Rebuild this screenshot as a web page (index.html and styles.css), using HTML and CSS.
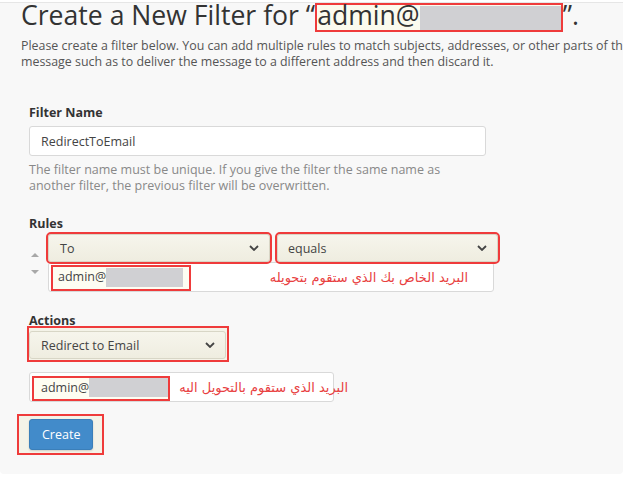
FILE: index.html
```html
<!DOCTYPE html>
<html lang="en">
<head>
    <meta charset="UTF-8">
    <meta name="viewport" content="width=device-width, initial-scale=1.0">
    <title>Create a New Filter</title>
    <link rel="stylesheet" href="styles.css">
</head>
<body>
    <div class="page">
        <h1 class="title">Create a New Filter for “<span class="mark-title"><span class="user">admin@</span><span class="blur blur-title"></span></span>”.</h1>
        <p class="intro">Please create a filter below. You can add multiple rules to match subjects, addresses, or other parts of the message. You can then add multiple actions to take on a<br>message such as to deliver the message to a different address and then discard it.</p>

        <form class="filter-form">
            <div class="group group-name">
                <label class="group-label" for="filterName">Filter Name</label>
                <input class="field field-name" id="filterName" type="text" value="RedirectToEmail">
                <p class="help">The filter name must be unique. If you give the filter the same name as<br>another filter, the previous filter will be overwritten.</p>
            </div>

            <div class="group group-rules">
                <label class="group-label">Rules</label>
                <div class="rule">
                    <div class="rule-order">
                        <span class="tri tri-up"></span>
                        <span class="tri tri-down"></span>
                    </div>
                    <div class="rule-body">
                        <div class="rule-selects">
                            <div class="select select-part marked">To
                                <svg class="chevron" width="10" height="6" viewBox="0 0 10 6"><path d="M1 1 L5 5 L9 1" fill="none" stroke="#444" stroke-width="1.8"/></svg>
                            </div>
                            <div class="select select-match marked">equals
                                <svg class="chevron" width="10" height="6" viewBox="0 0 10 6"><path d="M1 1 L5 5 L9 1" fill="none" stroke="#444" stroke-width="1.8"/></svg>
                            </div>
                        </div>
                        <div class="field field-email field-rule">
                            <span class="mark-email mark-rule"><span class="user">admin@</span><span class="blur blur-rule"></span></span>
                            <span class="note note-rule">البريد الخاص بك الذي ستقوم بتحويله</span>
                        </div>
                    </div>
                </div>
            </div>

            <div class="group group-actions">
                <label class="group-label">Actions</label>
                <div class="mark-box mark-action">
                    <div class="select select-action">Redirect to Email
                        <svg class="chevron" width="10" height="6" viewBox="0 0 10 6"><path d="M1 1 L5 5 L9 1" fill="none" stroke="#444" stroke-width="1.8"/></svg>
                    </div>
                </div>
                <div class="field field-email field-action">
                    <span class="mark-email mark-dest"><span class="user">admin@</span><span class="blur blur-dest"></span></span>
                    <span class="note note-dest">البريد الذي ستقوم بالتحويل اليه</span>
                </div>
            </div>

            <div class="mark-box mark-button">
                <button type="button" class="btn-create">Create</button>
            </div>
        </form>
    </div>
</body>
</html>
```

FILE: styles.css
```css
body { margin: 0; background: #fff; font-family: "Open Sans", "DejaVu Sans", sans-serif; font-size: 12.5px; color: #333; overflow: hidden; }
.page { margin-top: 2px; border-top: 1px solid #e6e6e6; background: #f8f8f8; padding-bottom: 19px; border-radius: 0 0 4px 4px; }

.title { margin: 0; padding-left: 21px; font-size: 26.6px; font-weight: 400; line-height: 24px; color: #333; white-space: nowrap; }
.mark-title { display: inline-block; line-height: 20px; border: 2px solid #ef3b3b; background: #fbfbee; }
.blur { display: inline-block; background: #d0d0d3; vertical-align: top; }
.blur-title { width: 141px; height: 24px; margin-top: 1px; }

.intro { margin: 6px 0 0; padding-left: 21px; font-size: 12.4px; line-height: 16px; color: #555; white-space: nowrap; }

.filter-form { padding-left: 29px; }
.group-label { display: block; font-weight: 700; line-height: 16px; color: #333; }
.group-name { margin-top: 35px; }
.group-name .group-label { margin-bottom: 5px; }
.group-rules { margin-top: 22px; }
.group-rules .group-label { margin-bottom: 2px; }
.group-actions { margin-top: 21px; }
.group-actions .group-label { margin-bottom: -3px; }

.field { box-sizing: border-box; height: 30px; border: 1px solid #d9d9d9; border-radius: 3px; background: #fff; font-family: inherit; font-size: 12.5px; color: #444; }
.field-name { display: block; width: 457px; padding: 0 11px; outline: none; }
.help { margin: 6px 0 0; line-height: 16px; color: #888; }

.rule { display: flex; }
.rule-order { width: 19px; display: flex; flex-direction: column; padding: 19px 0 0 2px; box-sizing: border-box; gap: 13px; }
.tri { width: 0; height: 0; border-left: 4px solid transparent; border-right: 4px solid transparent; }
.tri-up { border-bottom: 4px solid #a8a8a8; }
.tri-down { border-top: 4px solid #a8a8a8; }
.rule-body { width: 450px; }
.rule-selects { display: flex; gap: 7px; }

.select { box-sizing: border-box; height: 28px; display: flex; align-items: center; justify-content: space-between; padding: 0 10px 0 11px; border: 1px solid #d8d6c6; border-radius: 3px; background: linear-gradient(#f6f5ec, #efede0); color: #444; }
.select-part { width: 222px; }
.select-match { width: 221px; padding-left: 10px; }
.marked { outline: 2px solid #ef3b3b; }
.select-action { width: 197px; padding-left: 11px; }

.field-email { display: flex; align-items: flex-end; padding-left: 2px; }
.field-rule { width: 446px; }
.field-action { width: 305px; margin-top: 10px; }
.mark-email { display: flex; align-items: flex-start; border: 2px solid #ef3b3b; background: #fdfdf2; box-sizing: border-box; }
.mark-email .user { line-height: 20px; }
.mark-rule { height: 26px; padding: 0 6px 0 5px; }
.mark-dest { height: 25px; padding-left: 7px; }
.blur-rule { width: 77px; height: 19px; margin-top: 1px; }
.blur-dest { width: 79px; height: 19px; margin-top: 0; }

.note { font-family: "DejaVu Sans", sans-serif; font-size: 13px; color: #e8403f; white-space: nowrap; align-self: center; }
.note-rule { margin-left: auto; margin-right: 25px; }
.note-dest { margin-left: 9px; }

.mark-box { display: flex; width: max-content; border: 2px solid #ef3b3b; background: #f4f3e8; }
.mark-action { margin-left: -2px; padding: 3px 1px 1px 0; }
.mark-button { margin: 12px 0 0 -12px; padding: 3px 9px 3px 10px; }

.btn-create { height: 31px; padding: 0 12px; border: 1px solid #3b7fb9; border-radius: 3px; background: #428bca; color: #fff; font-family: inherit; font-size: 12.5px; box-shadow: 0 1px 2px rgba(0, 0, 0, 0.15); cursor: pointer; }
```
